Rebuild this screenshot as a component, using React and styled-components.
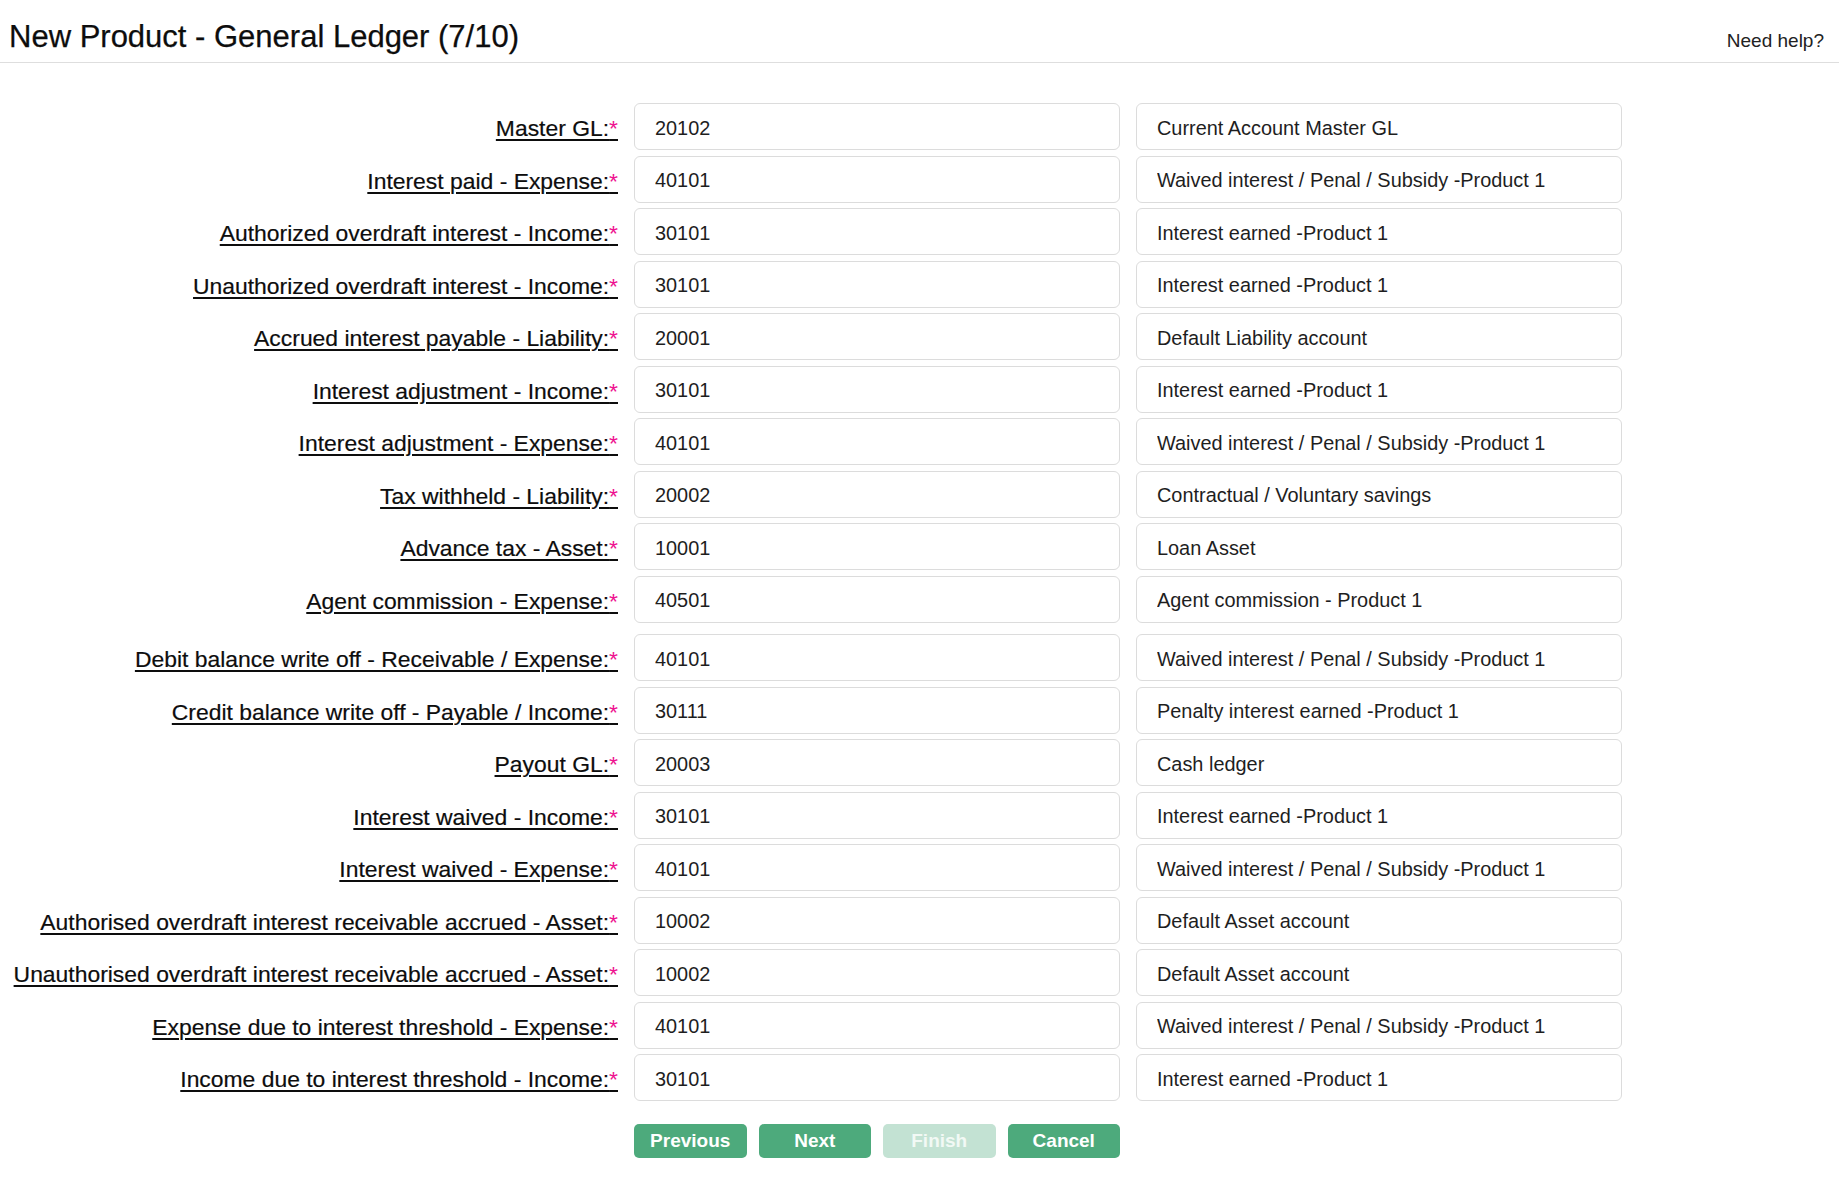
import React from "react";
import styled, { createGlobalStyle } from "styled-components";

const GlobalStyle = createGlobalStyle`
  html, body {
    margin: 0;
    padding: 0;
    background: #ffffff;
    font-family: "Liberation Sans", Arial, sans-serif;
    color: #111111;
  }
`;

const rows = [
  { label: "Master GL:", code: "20102", name: "Current Account Master GL" },
  { label: "Interest paid - Expense:", code: "40101", name: "Waived interest / Penal / Subsidy -Product 1" },
  { label: "Authorized overdraft interest - Income:", code: "30101", name: "Interest earned -Product 1" },
  { label: "Unauthorized overdraft interest - Income:", code: "30101", name: "Interest earned -Product 1" },
  { label: "Accrued interest payable - Liability:", code: "20001", name: "Default Liability account" },
  { label: "Interest adjustment - Income:", code: "30101", name: "Interest earned -Product 1" },
  { label: "Interest adjustment - Expense:", code: "40101", name: "Waived interest / Penal / Subsidy -Product 1" },
  { label: "Tax withheld - Liability:", code: "20002", name: "Contractual / Voluntary savings" },
  { label: "Advance tax - Asset:", code: "10001", name: "Loan Asset" },
  { label: "Agent commission - Expense:", code: "40501", name: "Agent commission - Product 1" },
  { label: "Debit balance write off - Receivable / Expense:", code: "40101", name: "Waived interest / Penal / Subsidy -Product 1", spaced: true },
  { label: "Credit balance write off - Payable / Income:", code: "30111", name: "Penalty interest earned -Product 1" },
  { label: "Payout GL:", code: "20003", name: "Cash ledger" },
  { label: "Interest waived - Income:", code: "30101", name: "Interest earned -Product 1" },
  { label: "Interest waived - Expense:", code: "40101", name: "Waived interest / Penal / Subsidy -Product 1" },
  { label: "Authorised overdraft interest receivable accrued - Asset:", code: "10002", name: "Default Asset account" },
  { label: "Unauthorised overdraft interest receivable accrued - Asset:", code: "10002", name: "Default Asset account" },
  { label: "Expense due to interest threshold - Expense:", code: "40101", name: "Waived interest / Penal / Subsidy -Product 1" },
  { label: "Income due to interest threshold - Income:", code: "30101", name: "Interest earned -Product 1" },
];

const Page = styled.div`
  width: 1839px;
  min-height: 1195px;
`;

const Header = styled.header`
  display: flex;
  justify-content: space-between;
  align-items: baseline;
  height: 63px;
  padding: 0 15px 0 9px;
  border-bottom: 1px solid #dedede;
  box-sizing: border-box;
`;

const Title = styled.h1`
  margin: 0;
  padding-top: 18px;
  font-size: 31px;
  font-weight: normal;
  color: #0d0d0d;
  line-height: 1.2;
  -webkit-text-stroke: 0.25px #0d0d0d;
`;

const Help = styled.a`
  font-size: 19px;
  color: #222222;
  text-decoration: none;
`;

const Form = styled.form`
  display: flex;
  flex-direction: column;
  gap: 5.5px;
  padding-top: 40px;
`;

const Row = styled.div`
  display: grid;
  grid-template-columns: 618px 486px 486px;
  column-gap: 16px;
  align-items: center;
  margin-top: ${(props) => (props.spaced ? "6px" : "0")};
`;

const Label = styled.label`
  justify-self: end;
  padding-top: 4px;
  font-size: 22.9px;
  color: #0d0d0d;
  text-decoration: underline;
  text-decoration-thickness: 1.5px;
  text-underline-offset: 3px;
  white-space: nowrap;
  -webkit-text-stroke: 0.2px #0d0d0d;
`;

const Required = styled.span`
  color: #ee1190;
  -webkit-text-stroke: 0;
`;

const Field = styled.input`
  box-sizing: border-box;
  width: 100%;
  height: 47px;
  padding: 3px 20px 0;
  border: 1px solid #dcdcdc;
  border-radius: 6px;
  background: #ffffff;
  font-family: "Liberation Sans", Arial, sans-serif;
  font-size: 19.9px;
  color: #1e1e1e;
  outline: none;
`;

const Actions = styled.div`
  display: grid;
  grid-template-columns: repeat(4, 1fr);
  column-gap: 12px;
  grid-column: 2;
  margin-top: 17px;
`;

const Button = styled.button`
  height: 34px;
  border: none;
  border-radius: 5px;
  background: ${(props) => (props.disabled ? "#c3e2d3" : "#4daa7c")};
  color: ${(props) => (props.disabled ? "#f2f9f5" : "#ffffff")};
  font-family: "Liberation Sans", Arial, sans-serif;
  font-size: 19px;
  font-weight: bold;
  padding: 0;
  cursor: ${(props) => (props.disabled ? "default" : "pointer")};
`;

export default function App() {
  return (
    <Page>
      <GlobalStyle />
      <Header>
        <Title>New Product - General Ledger (7/10)</Title>
        <Help href="#">Need help?</Help>
      </Header>
      <Form onSubmit={(e) => e.preventDefault()}>
        {rows.map((row, i) => (
          <Row key={i} spaced={row.spaced}>
            <Label htmlFor={`gl-${i}`}>
              {row.label}
              <Required>*</Required>
            </Label>
            <Field id={`gl-${i}`} value={row.code} readOnly />
            <Field value={row.name} readOnly />
          </Row>
        ))}
        <Row>
          <Actions>
            <Button type="button">Previous</Button>
            <Button type="button">Next</Button>
            <Button type="button" disabled>
              Finish
            </Button>
            <Button type="button">Cancel</Button>
          </Actions>
        </Row>
      </Form>
    </Page>
  );
}
